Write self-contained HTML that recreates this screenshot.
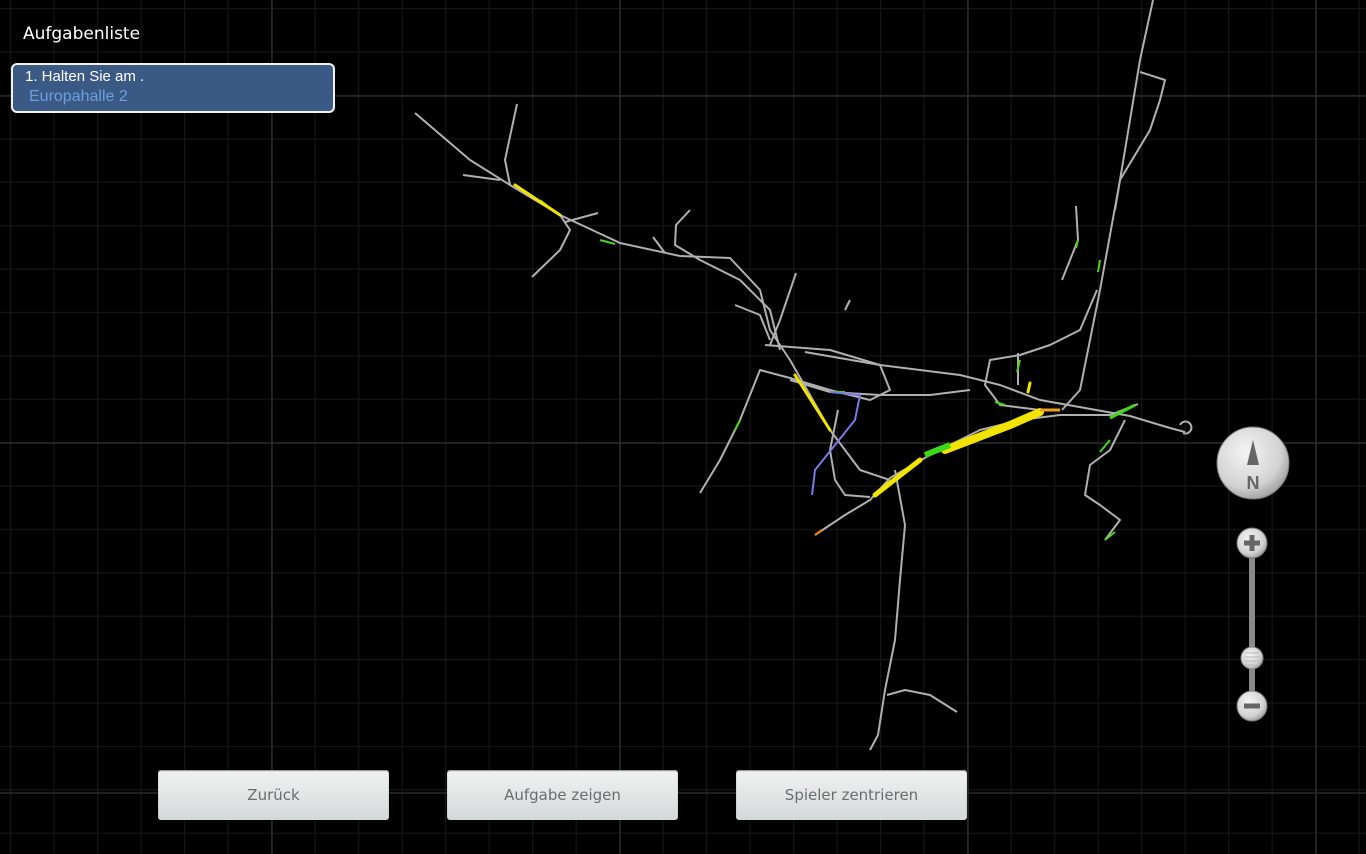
<!DOCTYPE html>
<html><head><meta charset="utf-8"><style>
html,body{margin:0;padding:0;}
body{width:1366px;height:854px;overflow:hidden;position:relative;background:#000;font-family:"Liberation Sans",sans-serif;}
#grid{position:absolute;left:0;top:0;}
.title{position:absolute;left:23px;top:24px;color:#fff;font-family:"DejaVu Sans","Liberation Sans",sans-serif;font-size:17px;}
.task{position:absolute;left:11px;top:63px;width:320px;height:46px;border:2px solid #f2f2f2;border-radius:6px;background:#3a5a85;}
.task .l1{position:absolute;left:12px;top:3px;color:#fff;font-size:15px;}
.task .l2{position:absolute;left:16px;top:23px;color:#6d9ee0;font-size:16px;}
.btn{position:absolute;top:770px;width:231px;height:50px;border-radius:3px;background:linear-gradient(#f1f3f2,#d4d8d8);color:#6a6d6e;text-align:center;line-height:51px;font-family:"DejaVu Sans","Liberation Sans",sans-serif;font-size:15px;box-shadow:0 1px 1px #888 inset;}
</style></head><body>
<svg id="grid" width="1366" height="854">
<defs>
<pattern id="minor" x="10" y="8" width="43.5" height="43.4" patternUnits="userSpaceOnUse">
<path d="M0.5 0V43.4M0 0.5H43.5" stroke="#151515" stroke-width="1.5" fill="none"/>
</pattern>
<radialGradient id="knob" cx="40%" cy="35%" r="70%"><stop offset="0" stop-color="#f4f4f4"/><stop offset="0.7" stop-color="#d2d2d2"/><stop offset="1" stop-color="#9a9a9a"/></radialGradient>
</defs>
<rect width="1366" height="854" fill="url(#minor)"/>
<g stroke="#2a2a2a" stroke-width="1.5">
<line x1="272" y1="0" x2="272" y2="854"/><line x1="620" y1="0" x2="620" y2="854"/><line x1="968" y1="0" x2="968" y2="854"/><line x1="1316" y1="0" x2="1316" y2="854"/>
<line x1="0" y1="96" x2="1366" y2="96"/><line x1="0" y1="443" x2="1366" y2="443"/><line x1="0" y1="793" x2="1366" y2="793"/>
</g>
<g fill="none" stroke="#b0b0b0" stroke-width="2" stroke-linejoin="round">
<path d="M415 113 L470 160 L510 185 L560 215 L620 243 L680 256 L730 258 L760 290 L770 330 L790 360 L830 430 L860 470 L890 480"/>
<path d="M517 104 L505 160 L510 185"/>
<path d="M463 175 L500 180"/>
<path d="M560 215 L570 230 L560 250 L532 277"/>
<path d="M565 222 L598 213"/>
<path d="M653 237 L665 253"/>
<path d="M690 210 L676 225 L675 245 L700 260 L740 280 L770 310 L780 350"/>
<path d="M796 273 L780 320 L770 345"/>
<path d="M735 305 L760 315 L770 340"/>
<path d="M1153 0 L1140 60 L1120 180 L1100 290 L1090 340 L1080 390 L1062 410"/>
<path d="M1140 72 L1165 80 L1160 100 L1150 130 L1120 180 L1115 210"/>
<path d="M1076 206 L1078 240 L1070 260 L1062 280"/>
<path d="M1097 290 L1080 330 L1050 345 L1020 355 L990 360 L985 385 L1000 405 L1040 410"/>
<path d="M1018 353 L1018 385"/>
<path d="M805 352 L880 365 L960 375 L1000 385 L1040 400 L1130 416 L1170 428 L1185 432"/>
<path d="M1138 404 L1110 415 L1060 415 L1020 420 L980 430 L930 455 L890 478 L870 500 L845 515 L815 535"/>
<path d="M1180 425 a6 6 0 1 1 3 8"/>
<path d="M850 300 L845 310"/>
<path d="M765 345 L830 350 L880 365 L890 390 L870 400 L830 390 L790 378 L760 370 L740 420 L720 460 L700 493"/>
<path d="M790 380 L830 392 L880 395 L930 395 L970 390"/>
<path d="M895 470 L905 525 L900 580 L895 640 L885 690 L878 735 L870 750"/>
<path d="M887 695 L905 690 L930 695 L957 712"/>
<path d="M838 410 L830 450 L835 480 L845 495 L870 497"/>
<path d="M1125 420 L1110 450 L1090 465 L1085 495 L1100 505 L1120 520 L1105 540"/>
</g>
<g fill="none" stroke="#4cd21c" stroke-width="2">
<path d="M540 200 L555 212"/><path d="M600 240 L615 244"/><path d="M1100 260 L1098 272"/><path d="M1078 240 L1076 248"/><path d="M1110 440 L1100 452"/><path d="M1105 540 L1115 532"/><path d="M740 420 L735 430"/><path d="M830 392 L845 392"/><path d="M1020 360 L1017 372"/><path d="M995 402 L1005 405"/>
</g>
<path d="M830 392 L860 395 L855 420 L835 445 L815 470 L812 495" fill="none" stroke="#7a7ae8" stroke-width="2"/>
<g fill="none" stroke="#f2e400" stroke-linecap="round">
<path d="M515 185 L560 215" stroke-width="3"/>
<path d="M795 375 L830 430" stroke-width="3"/>
<path d="M875 495 L920 460" stroke-width="5"/>
<path d="M945 450 L1010 425 L1040 412" stroke-width="8"/>
<path d="M1030 383 L1028 392" stroke-width="3"/>
</g>
<path d="M925 455 L950 445" stroke="#3ed81a" stroke-width="6"/>
<path d="M1110 418 L1135 405" stroke="#3ed81a" stroke-width="3"/>
<path d="M1040 410 L1060 410" stroke="#f0a020" stroke-width="3"/>
<path d="M815 535 L822 530" stroke="#f08020" stroke-width="2"/>
<circle cx="1253" cy="463" r="36" fill="url(#knob)" stroke="#777" stroke-width="1"/>
<path d="M1253 440 L1247 465 L1259 465 Z" fill="#666"/>
<text x="1253" y="489" font-size="18" font-weight="bold" fill="#666" text-anchor="middle" font-family="Liberation Sans">N</text>
<rect x="1249" y="550" width="6" height="160" fill="#8a8a8a"/>
<circle cx="1252" cy="543" r="15" fill="url(#knob)" stroke="#777"/>
<path d="M1252 535v16M1244 543h16" stroke="#666" stroke-width="5"/>
<circle cx="1252" cy="658" r="11" fill="url(#knob)" stroke="#888"/>
<path d="M1245 653h14M1244 657h16M1244 661h16M1245 665h14" stroke="#bbb" stroke-width="1"/>
<circle cx="1252" cy="706" r="15" fill="url(#knob)" stroke="#777"/>
<path d="M1244 706h16" stroke="#666" stroke-width="5"/>
</svg>
<div class="title">Aufgabenliste</div>
<div class="task"><div class="l1">1. Halten Sie am .</div><div class="l2">Europahalle 2</div></div>
<div class="btn" style="left:158px">Zurück</div>
<div class="btn" style="left:447px">Aufgabe zeigen</div>
<div class="btn" style="left:736px">Spieler zentrieren</div>
</body></html>
